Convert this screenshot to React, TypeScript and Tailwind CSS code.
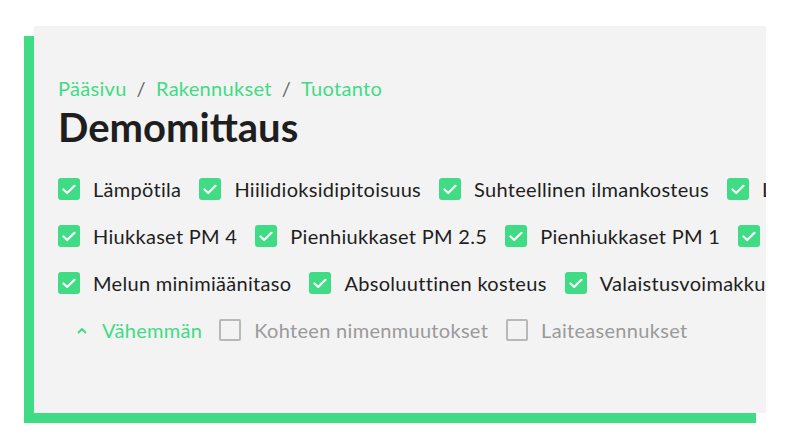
import React from "react";

const Check = ({ on = true }: { on?: boolean }) =>
  on ? (
    <span className="flex h-[22px] w-[22px] shrink-0 items-center justify-center rounded-[3px] bg-[#3fdc85]">
      <svg width="14" height="11" viewBox="0 0 14 11" fill="none">
        <path d="M1.5 5.5 L5.2 9 L12.5 1.8" stroke="white" strokeWidth="2.2" strokeLinecap="round" strokeLinejoin="round" />
      </svg>
    </span>
  ) : (
    <span className="h-[22px] w-[22px] shrink-0 rounded-[2px] border-2 border-[#b8b8b8]" />
  );

const Item = ({ label, on = true }: { label: string; on?: boolean }) => (
  <div className="mr-[18px] flex shrink-0 items-center gap-[13px]">
    <Check on={on} />
    <span className={on ? "text-[#1e1e1e]" : "text-[#9a9a9a]"}>{label}</span>
  </div>
);

export default function App() {
  return (
    <div className="h-[444px] w-[792px] bg-white pl-[34px] pt-[26px]" style={{ fontFamily: "Lato, 'Noto Sans', sans-serif" }}>
      <div className="h-[387px] w-[732px] overflow-hidden bg-[#f3f3f3] pl-6 pt-[50px] shadow-[-10px_10px_0_#3fdc85]">
        <div className="flex items-center whitespace-nowrap text-[20px] leading-[24px] tracking-[0.3px] text-[#3fdc85]">
          <span>Pääsivu</span>
          <span className="mx-[10px] text-[#666]">/</span>
          <span>Rakennukset</span>
          <span className="mx-[10px] text-[#666]">/</span>
          <span>Tuotanto</span>
        </div>
        <h1 className="mt-[5px] whitespace-nowrap text-[40px] font-bold leading-[44px] text-[#1e1e1e]">Demomittaus</h1>
        <div className="mt-[28px] flex flex-col gap-[23px] whitespace-nowrap text-[20px] leading-[24px] tracking-[0.3px]">
          <div className="flex items-center">
            <Item label="Lämpötila" />
            <Item label="Hiilidioksidipitoisuus" />
            <Item label="Suhteellinen ilmankosteus" />
            <Item label="Lämpötila" />
          </div>
          <div className="flex items-center">
            <Item label="Hiukkaset PM 4" />
            <Item label="Pienhiukkaset PM 2.5" />
            <Item label="Pienhiukkaset PM 1" />
            <Item label="Melutaso" />
          </div>
          <div className="flex items-center">
            <Item label="Melun minimiäänitaso" />
            <Item label="Absoluuttinen kosteus" />
            <Item label="Valaistusvoimakkuus" />
          </div>
          <div className="flex items-center">
            <div className="ml-[19px] mr-[17px] flex items-center gap-[15px] text-[#3fdc85]">
              <svg width="10" height="7" viewBox="0 0 10 7" fill="none">
                <path d="M1.5 5.5 L5 2 L8.5 5.5" stroke="#3fdc85" strokeWidth="1.8" strokeLinecap="round" strokeLinejoin="round" />
              </svg>
              <span>Vähemmän</span>
            </div>
            <Item label="Kohteen nimenmuutokset" on={false} />
            <Item label="Laiteasennukset" on={false} />
          </div>
        </div>
      </div>
    </div>
  );
}
